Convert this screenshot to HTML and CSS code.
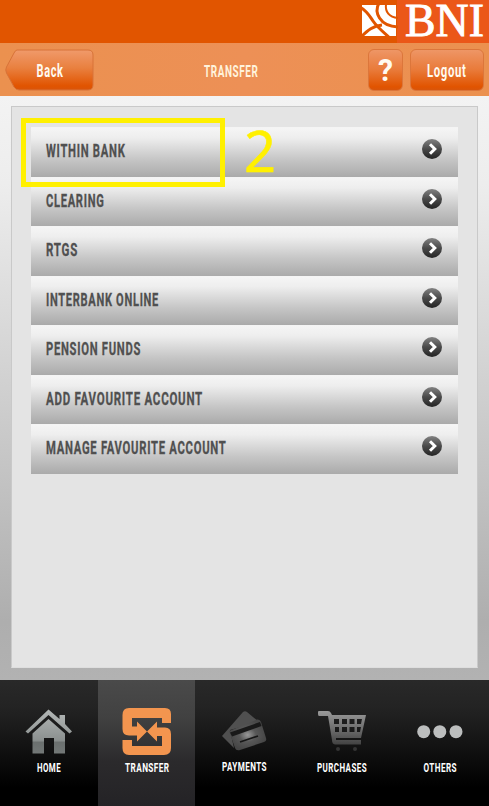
FILE: index.html
```html
<!DOCTYPE html>
<html lang="en">
<head>
<meta charset="utf-8">
<title>Transfer</title>
<link rel="stylesheet" href="styles.css">
</head>
<body>
<svg class="defs" width="0" height="0" aria-hidden="true">
  <defs>
    <linearGradient id="disc" x1="0" y1="0" x2="0" y2="1"><stop offset="0" stop-color="#828282"/><stop offset=".5" stop-color="#4a4a4a"/><stop offset="1" stop-color="#242424"/></linearGradient>
    <linearGradient id="silver" x1="0" y1="0" x2="0" y2="1"><stop offset="0" stop-color="#b4b8b7"/><stop offset=".7" stop-color="#8b908f"/><stop offset=".75" stop-color="#6b706f"/><stop offset="1" stop-color="#737877"/></linearGradient>
    <linearGradient id="cart" gradientUnits="userSpaceOnUse" x1="0" y1="0" x2="0" y2="40"><stop offset="0" stop-color="#999"/><stop offset=".5" stop-color="#686868"/><stop offset="1" stop-color="#303030"/></linearGradient>
    <radialGradient id="card"><stop offset="0" stop-color="#999"/><stop offset=".45" stop-color="#585858"/><stop offset="1" stop-color="#464646"/></radialGradient>
    <linearGradient id="back" x1="0" y1="0" x2="0" y2="1"><stop offset="0" stop-color="#f09a6b"/><stop offset=".45" stop-color="#e9803f"/><stop offset=".9" stop-color="#e15400"/><stop offset="1" stop-color="#d9550b"/></linearGradient>
    <symbol id="arrow" viewBox="0 0 22 22"><circle cx="11" cy="11" r="10" fill="url(#disc)"/><path d="M9 6.200l4.800 4.800L9 15.800" fill="none" stroke="#fff" stroke-width="3"/></symbol>
  </defs>
</svg>
<div class="app">
  <header class="brand">
    <svg width="128" height="43" viewBox="361 0 128 43">
      <path class="tint" d="M397 0h92v43h-92z"/>
      <path class="white" d="M362 5h34v31h-34z"/>
      <g class="cut">
        <path class="thick" d="M360 7C367 11 369 15 373 21C377 27 382 31 390 38"/>
        <path class="thick" d="M361 37C368 30 373 26 382 25"/>
        <path class="thick" d="M379 3C374 12 379 26 398 27"/>
        <path d="M386 4C385 12 389 17 398 18"/>
      </g>
      <text class="wordmark" x="405" y="36" textLength="79" lengthAdjust="spacingAndGlyphs">BNI</text>
    </svg>
  </header>
  <div class="toolbar">
    <div class="back">
      <svg width="90" height="42" viewBox="0 0 90 42">
        <path d="M12 1h71q5 0 5 5v30q0 5-5 5H14q-3 0-5-3L1.500 24q-1.500-3 0-6L9 4q1.500-3 3-3z" fill="url(#back)" stroke="#d87338"/>
        <text class="btn-text" x="31.500" y="28" textLength="27" lengthAdjust="spacingAndGlyphs">Back</text>
      </svg>
    </div>
    <h1 class="title"><svg width="56" height="28"><text class="title-text" x="1" y="18.500" textLength="54.500" lengthAdjust="spacingAndGlyphs">TRANSFER</text></svg></h1>
    <div class="actions">
      <div class="button help"><svg width="33" height="40"><text class="question" x="9" y="31" textLength="15" lengthAdjust="spacingAndGlyphs">?</text></svg></div>
      <div class="button logout"><svg width="71" height="40"><text class="btn-text" x="16" y="27" textLength="39.500" lengthAdjust="spacingAndGlyphs">Logout</text></svg></div>
    </div>
  </div>
  <main class="content">
    <section class="panel">
      <ul class="list">
        <li class="row"><svg class="label" width="250" height="48"><text x="0" y="29.500" textLength="79.500" lengthAdjust="spacingAndGlyphs">WITHIN BANK</text></svg><svg class="go"><use href="#arrow"/></svg></li>
        <li class="row"><svg class="label" width="250" height="48"><text x="0" y="29.500" textLength="58.500" lengthAdjust="spacingAndGlyphs">CLEARING</text></svg><svg class="go"><use href="#arrow"/></svg></li>
        <li class="row"><svg class="label" width="250" height="48"><text x="0" y="29.500" textLength="32" lengthAdjust="spacingAndGlyphs">RTGS</text></svg><svg class="go"><use href="#arrow"/></svg></li>
        <li class="row"><svg class="label" width="250" height="48"><text x="0" y="29.500" textLength="113" lengthAdjust="spacingAndGlyphs">INTERBANK ONLINE</text></svg><svg class="go"><use href="#arrow"/></svg></li>
        <li class="row"><svg class="label" width="250" height="48"><text x="0" y="29.500" textLength="95" lengthAdjust="spacingAndGlyphs">PENSION FUNDS</text></svg><svg class="go"><use href="#arrow"/></svg></li>
        <li class="row"><svg class="label" width="250" height="48"><text x="0" y="29.500" textLength="157" lengthAdjust="spacingAndGlyphs">ADD FAVOURITE ACCOUNT</text></svg><svg class="go"><use href="#arrow"/></svg></li>
        <li class="row"><svg class="label" width="250" height="48"><text x="0" y="29.500" textLength="180.500" lengthAdjust="spacingAndGlyphs">MANAGE FAVOURITE ACCOUNT</text></svg><svg class="go"><use href="#arrow"/></svg></li>
      </ul>
    </section>
  </main>
  <nav class="tabs">
    <div class="tab">
      <svg width="98" height="126" viewBox="0 680 98 126">
        <path fill="url(#silver)" d="M48.500 709.500L59.500 719V715H65V724L72 731.500L69.500 733.500L48.500 715L28 733.500L25.500 731.500ZM48.500 719L65 733.500V753.500H54V738H44V753.500H32.500V733.500Z"/>
        <text x="37" y="772" textLength="24" lengthAdjust="spacingAndGlyphs">HOME</text>
      </svg>
    </div>
    <div class="tab active">
      <svg width="97" height="126" viewBox="98 680 97 126">
        <path class="orange" d="M129 708H165Q171 708 171 714V723H162V718H132V726.500H137V721.500L147 731.500L137 741.500V735.500H129Q122.500 735.500 122.500 729V715Q122.500 708 129 708ZM157 721.500V727.500H165Q171 727.500 171 734V748Q171 755 164 755H129Q122.500 755 122.500 748V740H132V746H162V736H157V741.500L147 731.500Z"/>
        <text x="125" y="772" textLength="44.500" lengthAdjust="spacingAndGlyphs">TRANSFER</text>
      </svg>
    </div>
    <div class="tab">
      <svg width="98" height="126" viewBox="195 680 98 126">
        <path d="M222 736L243 712Q245 710.500 247 712L259 722L230 730L234 748Z" fill="#505050"/>
        <path d="M229 731L257 719.500Q260 719 261 722L266 738Q267 741 264 742L240 750Q236 751 235 748Z" fill="url(#card)"/>
        <path d="M230 732.500L260 722L261.500 726L232 736.500Z" fill="#191919"/>
        <path d="M240 742L258 736" stroke="#171717" stroke-width="1.800"/>
        <text x="222" y="771" textLength="45" lengthAdjust="spacingAndGlyphs">PAYMENTS</text>
      </svg>
    </div>
    <div class="tab">
      <svg width="98" height="126" viewBox="293 680 98 126">
        <g transform="translate(318 711)">
          <path fill="url(#cart)" fill-rule="evenodd" d="M1 0H10Q12 0 13 2L14 4H48L43 27H18V29H43V33.500H17Q14 33 14 29L10 5H1Q0 5 0 3V1Q0 0 1 0ZM16 8V13H21V8ZM24 8V13H29V8ZM31.500 8V13H36.500V8ZM39 8V13H43L44 8ZM17 16V21H21V16ZM24 16V21H29V16ZM31.500 16V21H36.500V16ZM39 16V21H42L43 16Z"/>
          <circle cx="20" cy="38" r="2" fill="#343434"/><circle cx="37" cy="38" r="2" fill="#343434"/>
        </g>
        <text x="317" y="772" textLength="50" lengthAdjust="spacingAndGlyphs">PURCHASES</text>
      </svg>
    </div>
    <div class="tab">
      <svg width="98" height="126" viewBox="391 680 98 126">
        <g fill="#bcbebe"><circle cx="423.700" cy="731.700" r="6.500"/><circle cx="439.800" cy="731.700" r="6.500"/><circle cx="456" cy="731.700" r="6.500"/></g>
        <text x="423.500" y="772" textLength="33.500" lengthAdjust="spacingAndGlyphs">OTHERS</text>
      </svg>
    </div>
  </nav>
  <div class="highlight"></div>
  <svg class="step" width="40" height="56"><text x="4" y="47" textLength="32" lengthAdjust="spacingAndGlyphs">2</text></svg>
</div>
</body>
</html>
```
FILE: styles.css
```css
* { box-sizing: border-box; }
body { margin: 0; font-family: Roboto, "Liberation Sans", sans-serif; }
svg { display: block; flex: none; overflow: visible; }
.defs { position: absolute; }
.app { position: relative; width: 489px; height: 806px; overflow: hidden; display: flex; flex-direction: column; }

.brand { height: 43px; background: #e15500; display: flex; justify-content: flex-end; }
.tint { fill: #eb5718; }
.white { fill: #fff; }
.cut { fill: none; stroke: #e15500; stroke-width: 2; }
.thick { stroke-width: 3; }
.wordmark { font: 47px "Liberation Serif", serif; fill: #fff; stroke: #fff; stroke-width: .9; }

.toolbar { height: 53px; background: linear-gradient(90deg, #eb914f, #ed9056 50%, #eb914f); display: flex; align-items: flex-start; padding: 6px 5px 0; }
.back { width: 198px; }
.title { margin: 9px 0 0; }
.title-text { font-size: 17px; font-weight: 700; letter-spacing: 1px; fill: #fff3dc; }
.btn-text { font-size: 17.5px; font-weight: 700; letter-spacing: 1px; fill: #fffaf0; }
.question { font-size: 32px; font-weight: 700; fill: #fffaf0; }
.actions { margin-left: auto; display: flex; gap: 7px; }
.button { height: 42px; border: 1px solid #dc763b; border-radius: 6px; background: linear-gradient(#ee9666, #e97a39 50%, #e15400 92%, #d9550b); }
.help { width: 35px; }
.logout { width: 74px; }

.content { height: 583.500px; padding: 10px 11px 11px; background: linear-gradient(#f3f3f3, #ededed 15%, #d0d0d0 50%, #aeaeae 90%, #b2b2b2); }
.panel { height: 562px; padding: 20px 19px 0; background: #e4e4e4; border: 1px solid #c9c9c9; border-bottom-color: #dedede; }
.list { margin: 0; padding: 0; list-style: none; height: 347px; display: grid; grid-template-rows: repeat(7, 1fr); }
.row { display: flex; justify-content: space-between; padding: 0 15px; background: linear-gradient(#f5f5f5, #eee 20%, #c5c5c5 65%, #aaa); border-top: 1px solid #f4f4f4; }
.label { margin-top: -1px; font-size: 19px; font-weight: 700; letter-spacing: 1.2px; fill: #505050; stroke: #505050; stroke-width: .3; }
.go { width: 22px; height: 22px; margin-top: 10px; }

.tabs { height: 126.500px; display: flex; background: linear-gradient(#292929, #232323 22%, #151515 48%, #000 85%); }
.tab { font-size: 13.5px; font-weight: 700; letter-spacing: .7px; fill: #fff; }
.active { background: linear-gradient(#4a4a4a, #414141 30%, #2b2a2c 65%, #242326); }
.orange { fill: #f3954f; }

.highlight { position: absolute; left: 21px; top: 118px; width: 204px; height: 69px; border: 5px solid #fff000; }
.step { position: absolute; left: 240px; top: 125px; font: 57px "Noto Sans", sans-serif; fill: #fff000; stroke: #fff000; stroke-width: .5; }
```
